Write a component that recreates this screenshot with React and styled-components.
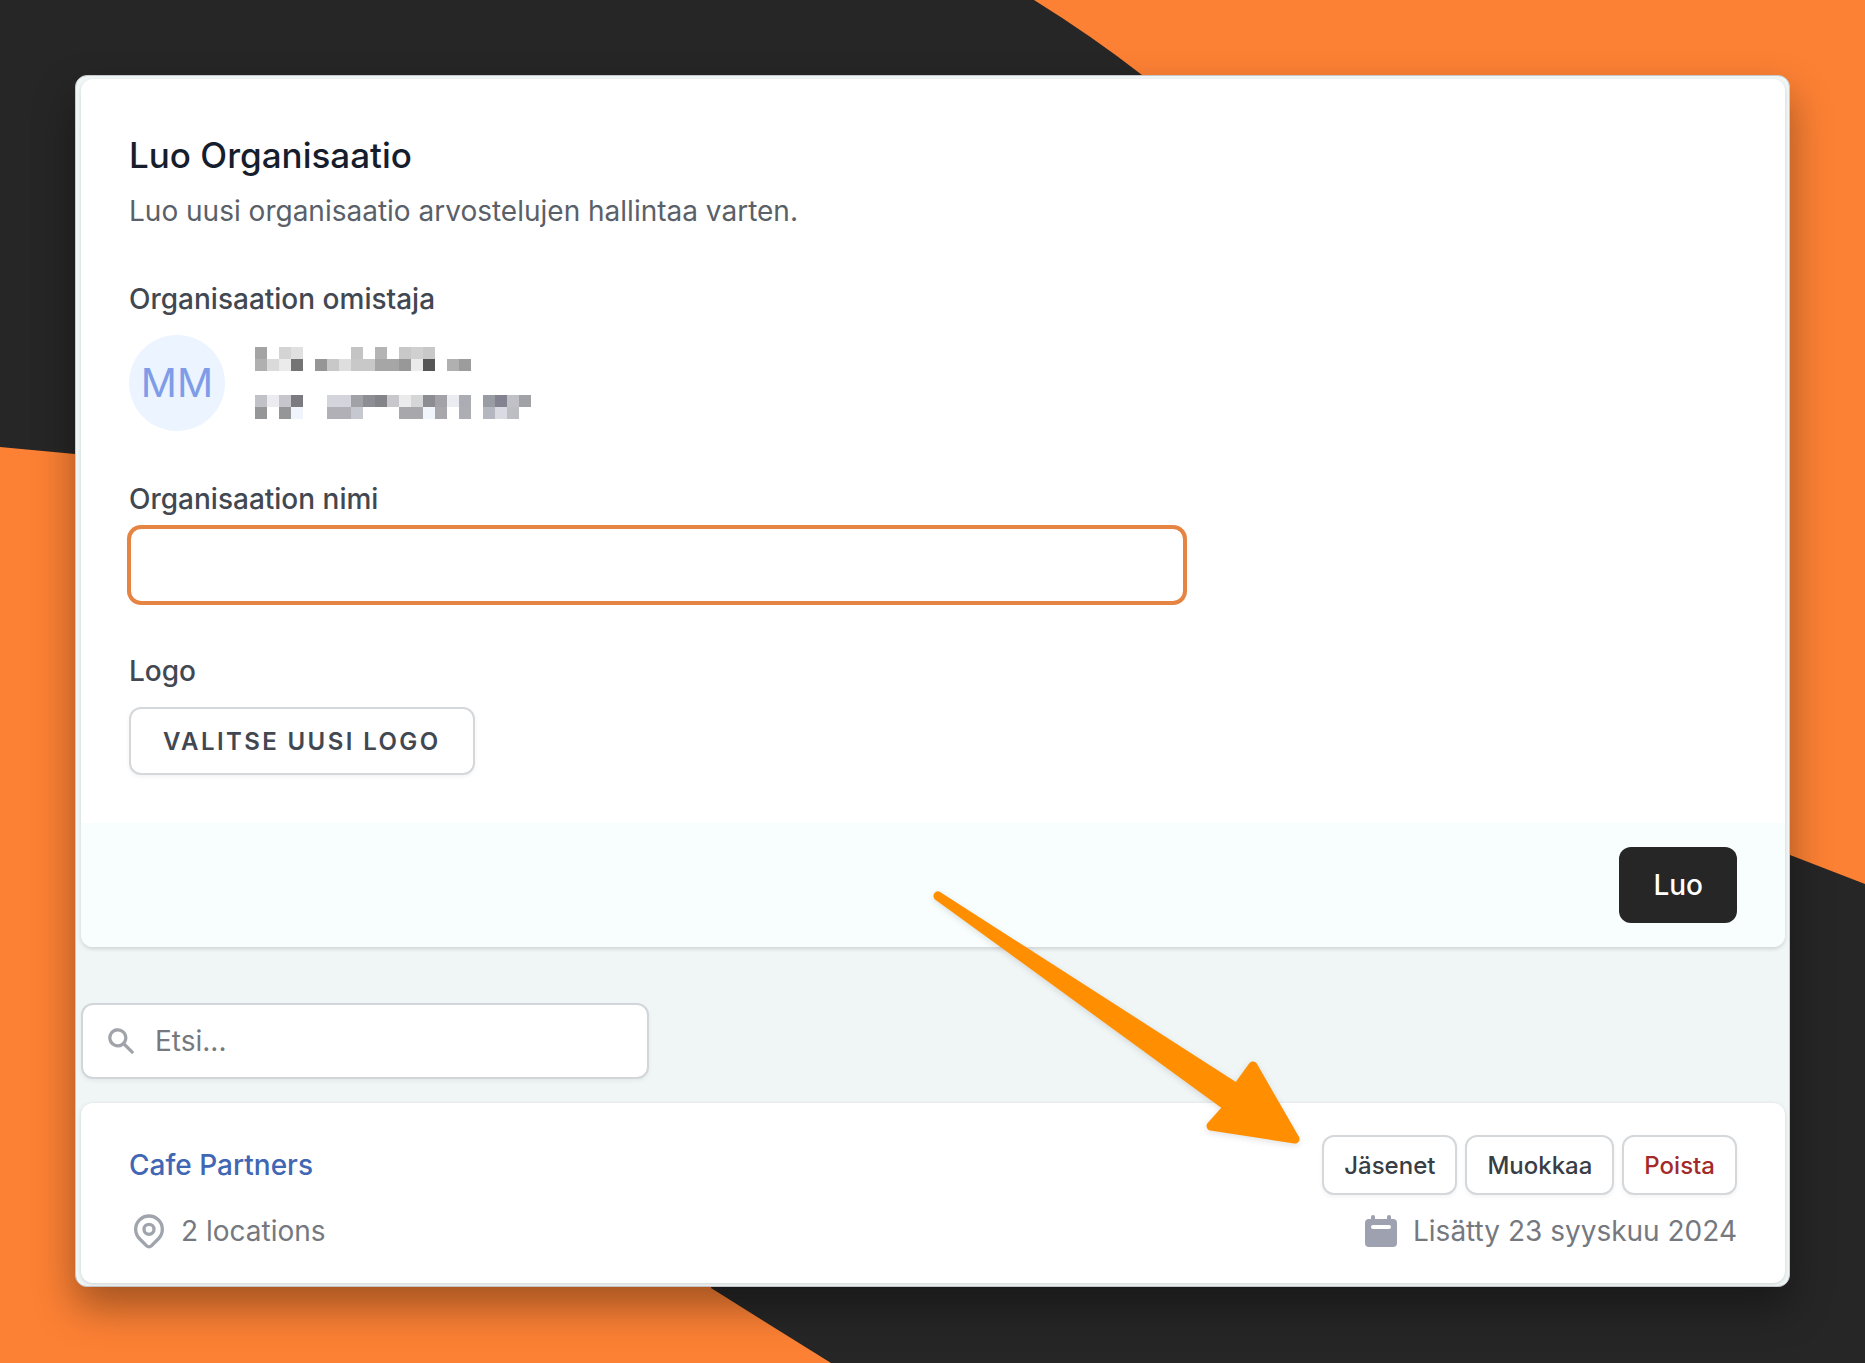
import { useState } from "react";
import styled, { createGlobalStyle } from "styled-components";

const NAME_PIXELS = [
  "a4a4a4 - d4d4d4 e0e0e0 - - - - c4c4c4 - b4b4b4 - c8c8c8 d0d0d0 c8c8c8",
  "b0b0b0 dadada ebebeb 747474 - 969696 c8c8c8 dedede c8c8c8 c8c8c8 a6a6a6 a6a6a6 989898 ebebeb 565656 - b0b0b0 9c9c9c",
];

const EMAIL_PIXELS = [
  "c0c2c8 ececf0 c6c6cc 7a7a80 - - d4d4dc d4d4dc a0a2a8 8c8e94 828488 c8c8cc ebebeb d4d6d8 8c8c92 a2a2a8 ebebf2 acacb4 - 9a9ca4 828290 c0c0c6 a0a2a6",
  "949698 - 949698 f0f4fc - - b0b0b6 b0b0b6 c6c8d0 - - - a8a8ac a8a8ac f0f6fc a8a8ac - acaeb4 - b4b6c0 dadae2 bcbec2",
];

const Mosaic = ({ rows }) => (
  <svg width="276" height="24" shapeRendering="crispEdges" aria-hidden="true">
    {rows.map((row, y) =>
      row
        .split(" ")
        .map((color, x) =>
          color === "-" ? null : (
            <rect
              key={`${x}-${y}`}
              x={x * 12}
              y={y * 12}
              width="12"
              height="12"
              fill={`#${color}`}
            />
          )
        )
    )}
  </svg>
);

const SearchIcon = () => (
  <svg width="32" height="32" viewBox="0 0 20 20" fill="#a0a4aa" aria-hidden="true">
    <path
      fillRule="evenodd"
      clipRule="evenodd"
      d="M8 4a4 4 0 100 8 4 4 0 000-8zM2 8a6 6 0 1110.89 3.476l4.817 4.817a1 1 0 01-1.414 1.414l-4.816-4.816A6 6 0 012 8z"
    />
  </svg>
);

const PinIcon = () => (
  <svg
    width="40"
    height="40"
    viewBox="0 0 24 24"
    fill="none"
    stroke="#a0a4ac"
    strokeWidth="2"
    strokeLinecap="round"
    strokeLinejoin="round"
    aria-hidden="true"
  >
    <path d="M17.657 16.657L13.414 20.9a1.998 1.998 0 01-2.827 0l-4.244-4.243a8 8 0 1111.314 0z" />
    <path d="M15 11a3 3 0 11-6 0 3 3 0 016 0z" />
  </svg>
);

const CalendarIcon = () => (
  <svg width="40" height="40" viewBox="0 0 20 20" fill="#9ea2b0" aria-hidden="true">
    <path
      fillRule="evenodd"
      clipRule="evenodd"
      d="M6 2a1 1 0 00-1 1v1H4a2 2 0 00-2 2v10a2 2 0 002 2h12a2 2 0 002-2V6a2 2 0 00-2-2h-1V3a1 1 0 10-2 0v1H7V3a1 1 0 00-1-1zm0 5a1 1 0 000 2h8a1 1 0 100-2H6z"
    />
  </svg>
);

const App = () => {
  const [name, setName] = useState("");
  const [search, setSearch] = useState("");

  return (
    <Page>
      <GlobalStyle />
      <Backdrop viewBox="0 0 1865 1363" preserveAspectRatio="none" aria-hidden="true">
        <rect width="1865" height="1363" fill="#fc8134" />
        <path d="M0 0H1034Q1092 36 1142 75L932 600L75 454L0 447Z" fill="#262626" />
        <path d="M1865 884L1790 855L932 600L711 1288L831 1363H1865Z" fill="#262626" />
      </Backdrop>
      <Frame>
        <Card>
          <Form>
            <Intro>
              <Title>Luo Organisaatio</Title>
              <Description>
                Luo uusi organisaatio arvostelujen hallintaa varten.
              </Description>
            </Intro>
            <Field $gap="16px">
              <Label as="span">Organisaation omistaja</Label>
              <Owner>
                <Avatar>MM</Avatar>
                <OwnerInfo>
                  <Mosaic rows={NAME_PIXELS} />
                  <Mosaic rows={EMAIL_PIXELS} />
                </OwnerInfo>
              </Owner>
            </Field>
            <Field $gap="8px">
              <Label htmlFor="name">Organisaation nimi</Label>
              <NameInput
                id="name"
                type="text"
                value={name}
                onChange={(e) => setName(e.target.value)}
              />
            </Field>
            <Field $gap="16px">
              <Label htmlFor="logo">Logo</Label>
              <LogoButton id="logo" type="button">
                Valitse uusi logo
              </LogoButton>
            </Field>
          </Form>
          <Footer>
            <SubmitButton type="button">Luo</SubmitButton>
          </Footer>
        </Card>

        <SearchBox>
          <SearchIcon />
          <SearchInput
            type="search"
            aria-label="Etsi"
            placeholder="Etsi..."
            value={search}
            onChange={(e) => setSearch(e.target.value)}
          />
        </SearchBox>

        <ListCard>
          <Row>
            <OrgLink href="#cafe-partners">Cafe Partners</OrgLink>
            <Actions>
              <ActionButton type="button">Jäsenet</ActionButton>
              <ActionButton type="button">Muokkaa</ActionButton>
              <ActionButton type="button" $color="#a32a2a">
                Poista
              </ActionButton>
            </Actions>
          </Row>
          <Row>
            <Meta>
              <PinIcon />2 locations
            </Meta>
            <Meta>
              <CalendarIcon />
              Lisätty 23 syyskuu 2024
            </Meta>
          </Row>
        </ListCard>

        <Arrow viewBox="925 885 380 265" aria-hidden="true">
          <path
            d="M938 896L1237 1088L1253 1066L1295 1139L1211 1126L1228 1107Z"
            fill="#ff8f00"
            stroke="#ff8f00"
            strokeWidth="9"
            strokeLinejoin="round"
          />
        </Arrow>
      </Frame>
    </Page>
  );
};

export default App;

const GlobalStyle = createGlobalStyle`
  * {
    box-sizing: border-box;
  }

  body {
    margin: 0;
    font-family: Inter, "Liberation Sans", sans-serif;
    font-size: 28px;
    line-height: 40px;
  }

  button,
  input {
    font-family: inherit;
  }
`;

const Page = styled.main`
  position: relative;
  min-height: 100vh;
  padding: 75px;
  overflow: hidden;
`;

const Backdrop = styled.svg`
  position: absolute;
  inset: 0;
  width: 100%;
  height: 100%;
`;

const Frame = styled.div`
  position: relative;
  padding: 3px 4px 3px 5px;
  background-color: #f0f5f6;
  border: 1px solid #c8c8cc;
  border-radius: 12px;
  box-shadow: 0 20px 40px rgba(0, 0, 0, 0.36);
`;

const Card = styled.section`
  background-color: #fff;
  border-radius: 12px;
  box-shadow: 0 2px 4px rgba(0, 0, 0, 0.14);
  overflow: hidden;
`;

const Form = styled.div`
  display: flex;
  flex-direction: column;
  gap: 48px;
  padding: 52px 48px 48px;
`;

const Intro = styled.header`
  display: flex;
  flex-direction: column;
  gap: 12px;
`;

const Title = styled.h2`
  margin: 0;
  color: #161e2e;
  font-size: 35px;
  font-weight: 500;
  line-height: 48px;
`;

const Description = styled.p`
  margin: 0;
  color: #5a6068;
`;

const Field = styled.div`
  display: flex;
  flex-direction: column;
  align-items: flex-start;
  gap: ${({ $gap }) => $gap};
`;

const Label = styled.label`
  color: #424851;
  font-weight: 500;
`;

const Owner = styled.div`
  display: flex;
  align-items: center;
  gap: 30px;
`;

const Avatar = styled.div`
  display: flex;
  align-items: center;
  justify-content: center;
  width: 96px;
  height: 96px;
  flex-shrink: 0;
  background-color: #ebf4ff;
  border-radius: 50%;
  color: #7f9ce8;
  font-size: 40px;
`;

const OwnerInfo = styled.div`
  display: flex;
  flex-direction: column;
  gap: 24px;
`;

const NameInput = styled.input`
  width: calc((100% - 240px) / 6 * 4 + 144px);
  height: 76px;
  padding: 0 24px;
  border: 2px solid #e58443;
  border-radius: 12px;
  box-shadow: 0 0 0 2px #e58443;
  outline: none;
  font-size: 28px;
`;

const OutlineButton = styled.button`
  background-color: #fff;
  border: 2px solid #d5d8db;
  border-radius: 12px;
  box-shadow: 0 2px 4px rgba(0, 0, 0, 0.05);
  font-size: 24px;
  cursor: pointer;
`;

const LogoButton = styled(OutlineButton)`
  height: 68px;
  padding: 0 32px;
  color: #424851;
  font-weight: 600;
  letter-spacing: 0.1em;
  text-transform: uppercase;
`;

const Footer = styled.footer`
  display: flex;
  justify-content: flex-end;
  padding: 24px 48px;
  background-color: #f8fdfd;
`;

const SubmitButton = styled.button`
  height: 76px;
  padding: 0 34px;
  background-color: #262626;
  border: none;
  border-radius: 12px;
  color: #fff;
  font-size: 28px;
  font-weight: 500;
  cursor: pointer;
`;

const SearchBox = styled.div`
  display: flex;
  align-items: center;
  gap: 18px;
  width: calc(100% / 3);
  height: 76px;
  margin: 56px 0 24px;
  padding: 0 22px;
  background-color: #fff;
  border: 2px solid #d2d6da;
  border-radius: 12px;
  box-shadow: 0 2px 4px rgba(0, 0, 0, 0.05);
`;

const SearchInput = styled.input`
  flex: 1;
  min-width: 0;
  padding: 0;
  background: none;
  border: none;
  outline: none;
  font-size: 28px;

  &::placeholder {
    color: #75797f;
  }
`;

const ListCard = styled.section`
  display: flex;
  flex-direction: column;
  gap: 16px;
  padding: 32px 48px;
  background-color: #fff;
  border-radius: 12px;
  box-shadow: 0 1px 4px rgba(0, 0, 0, 0.14);
`;

const Row = styled.div`
  display: flex;
  align-items: center;
  justify-content: space-between;
`;

const OrgLink = styled.a`
  color: #4166b4;
  font-weight: 500;
  text-decoration: none;
`;

const Actions = styled.div`
  display: flex;
  gap: 8px;
`;

const ActionButton = styled(OutlineButton)`
  height: 60px;
  padding: 0 20px;
  color: ${({ $color }) => $color || "#383d46"};
  font-weight: 500;
`;

const Meta = styled.div`
  display: flex;
  align-items: center;
  gap: 12px;
  color: #75797f;
`;

const Arrow = styled.svg`
  position: absolute;
  right: 484px;
  bottom: 136px;
  width: 380px;
  height: 265px;
  pointer-events: none;
  filter: drop-shadow(0 2px 3px rgba(0, 0, 0, 0.12));
`;
